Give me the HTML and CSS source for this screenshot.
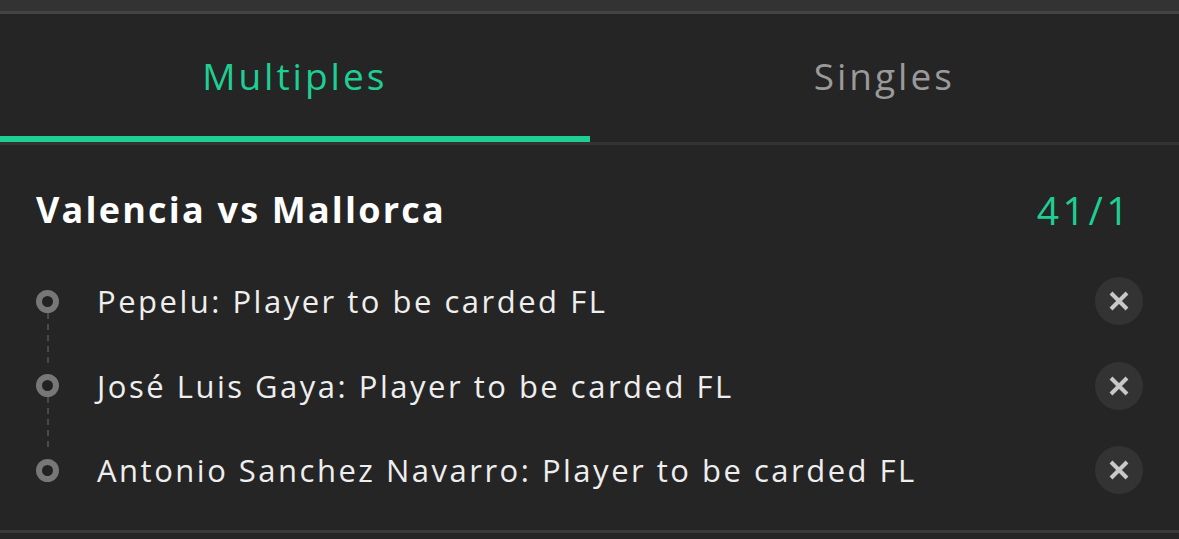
FILE: index.html
```html
<!DOCTYPE html>
<html lang="en">
<head>
    <meta charset="UTF-8">
    <title>Bet Slip</title>
    <link rel="stylesheet" href="styles.css">
</head>
<body>
    <div class="top-strip"></div>

    <!-- Slip type tabs -->
    <div class="tabs">
        <div class="tab active">Multiples</div>
        <div class="tab">Singles</div>
    </div>

    <div class="slip">
        <div class="match">
            <span class="match-name">Valencia vs Mallorca</span>
            <span class="odds">41/1</span>
        </div>

        <ul class="legs">
            <li class="leg">
                <span class="dot"></span>
                <span class="leg-text">Pepelu: Player to be carded FL</span>
                <button class="remove">
                    <svg viewBox="0 0 18 18"><path d="M3 3L15 15M15 3L3 15"/></svg>
                </button>
            </li>
            <li class="leg">
                <span class="dot"></span>
                <span class="leg-text">José Luis Gaya: Player to be carded FL</span>
                <button class="remove">
                    <svg viewBox="0 0 18 18"><path d="M3 3L15 15M15 3L3 15"/></svg>
                </button>
            </li>
            <li class="leg">
                <span class="dot"></span>
                <span class="leg-text">Antonio Sanchez Navarro: Player to be carded FL</span>
                <button class="remove">
                    <svg viewBox="0 0 18 18"><path d="M3 3L15 15M15 3L3 15"/></svg>
                </button>
            </li>
        </ul>
    </div>

    <div class="bottom-strip"></div>
</body>
</html>
```

FILE: styles.css
```css
html, body {
    margin: 0;
    padding: 0;
    background-color: #252525;
    font-family: "Open Sans", sans-serif;
    color: #f2f2f2;
    overflow: hidden;
}
.top-strip {
    height: 11px;
    background-color: #333;
    border-bottom: 3px solid #444;
}
.tabs {
    display: flex;
    border-bottom: 3px solid #333;
}
.tab {
    flex: 1;
    text-align: center;
    font-size: 37px;
    letter-spacing: 3px;
    color: #9a9a9a;
    height: 128px;
    line-height: 124px;
    box-sizing: border-box;
}
.tab.active {
    color: #1ecf93;
    border-bottom: 6px solid #1ecf93;
}
.slip {
    padding: 0 36px;
    height: 385px;
    box-sizing: border-box;
}
.match {
    display: flex;
    justify-content: space-between;
    align-items: center;
    height: 128px;
    padding-right: 11px;
}
.match-name {
    font-size: 36px;
    font-weight: bold;
    letter-spacing: 2.2px;
    color: #fff;
}
.odds {
    font-size: 39px;
    font-weight: 500;
    letter-spacing: 3.5px;
    color: #1ecf93;
}
.legs {
    list-style: none;
    margin: -14px 0 0 0;
    padding: 0;
}
.leg {
    display: flex;
    align-items: center;
    height: 84.5px;
    position: relative;
}
/* dashed connector between the dots */
.leg + .leg::before {
    content: "";
    position: absolute;
    left: 11px;
    top: -31px;
    height: 50px;
    border-left: 2px dashed #4a4a4a;
}
.dot {
    width: 11px;
    height: 11px;
    border: 6px solid #777;
    border-radius: 50%;
    background: #222;
    margin-right: 38px;
    flex-shrink: 0;
}
.leg-text {
    flex: 1;
    font-size: 31px;
    letter-spacing: 2.5px;
    color: #eee;
}
.remove {
    display: flex;
    align-items: center;
    justify-content: center;
    width: 48px;
    height: 48px;
    border-radius: 50%;
    border: none;
    background-color: #333;
    padding: 0;
    cursor: pointer;
}
.remove svg {
    width: 24px;
    height: 24px;
    stroke: #c8c8c8;
    stroke-width: 3;
    fill: none;
}
.bottom-strip {
    height: 3px;
    background-color: #3a3a3a;
}
```
